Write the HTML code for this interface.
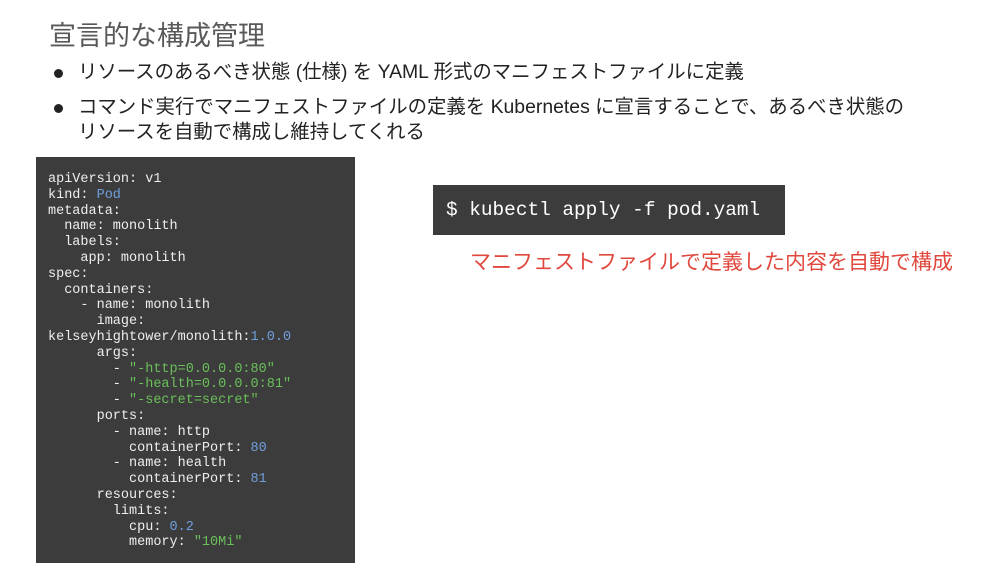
<!DOCTYPE html>
<html><head><meta charset="utf-8"><style>
body{margin:0;width:982px;height:572px;background:#fff;position:relative;overflow:hidden;font-family:"Liberation Sans","Noto Sans CJK JP",sans-serif}
.t{position:absolute;left:49px;top:14px;font-size:27px;color:#595959;white-space:nowrap}
.b{position:absolute;left:78px;font-size:19.4px;color:#222;white-space:nowrap;line-height:25px}
.dot{position:absolute;left:54px;width:9px;height:9px;border-radius:50%;background:#222}
.code{position:absolute;left:36px;top:157px;width:319px;height:406px;background:#3c3c3c}
.code pre{margin:0;position:absolute;left:12px;top:15px;font-family:"Liberation Mono",monospace;font-size:13.5px;line-height:15.8px;color:#eee}
.bl{color:#6f9fdc}.gr{color:#6abf5a}
.cmd{position:absolute;left:433px;top:185px;width:352px;height:50px;background:#3c3c3c;color:#fff;font-family:"Liberation Mono",monospace;font-size:19.4px;line-height:50px;padding-left:13px;box-sizing:border-box;white-space:nowrap}
.red{position:absolute;left:470px;top:246px;font-size:21px;color:#e0483e;white-space:nowrap}
</style></head><body>
<div class="t">宣言的な構成管理</div>
<div class="dot" style="top:69px"></div>
<div class="b" style="top:60px">リソースのあるべき状態 (仕様) を YAML 形式のマニフェストファイルに定義</div>
<div class="dot" style="top:104px"></div>
<div class="b" style="top:95px">コマンド実行でマニフェストファイルの定義を Kubernetes に宣言することで、あるべき状態の<br>リソースを自動で構成し維持してくれる</div>
<div class="code"><pre>apiVersion: v1
kind: <span class="bl">Pod</span>
metadata:
  name: monolith
  labels:
    app: monolith
spec:
  containers:
    - name: monolith
      image:
kelseyhightower/monolith:<span class="bl">1.0.0</span>
      args:
        - <span class="gr">"-http=0.0.0.0:80"</span>
        - <span class="gr">"-health=0.0.0.0:81"</span>
        - <span class="gr">"-secret=secret"</span>
      ports:
        - name: http
          containerPort: <span class="bl">80</span>
        - name: health
          containerPort: <span class="bl">81</span>
      resources:
        limits:
          cpu: <span class="bl">0.2</span>
          memory: <span class="gr">"10Mi"</span></pre></div>
<div class="cmd">$ kubectl apply -f pod.yaml</div>
<div class="red">マニフェストファイルで定義した内容を自動で構成</div>
</body></html>
